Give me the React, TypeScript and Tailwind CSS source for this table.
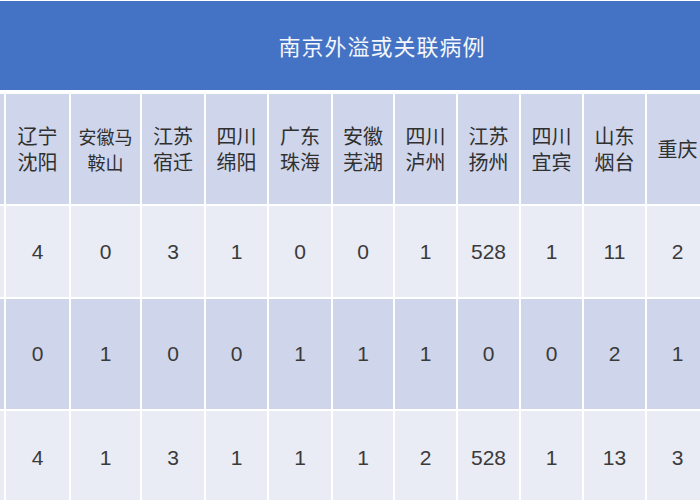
const cols = [
  { w: "w-[4px]", head: [""] },
  { w: "w-[63px]", head: ["辽宁", "沈阳"] },
  { w: "w-[69px]", head: ["安徽马", "鞍山"], small: true },
  { w: "w-[62px]", head: ["江苏", "宿迁"] },
  { w: "w-[61px]", head: ["四川", "绵阳"] },
  { w: "w-[62px]", head: ["广东", "珠海"] },
  { w: "w-[60px]", head: ["安徽", "芜湖"] },
  { w: "w-[61px]", head: ["四川", "泸州"] },
  { w: "w-[61px]", head: ["江苏", "扬州"] },
  { w: "w-[61px]", head: ["四川", "宜宾"] },
  { w: "w-[61px]", head: ["山东", "烟台"] },
  { w: "w-[61px]", head: ["重庆"] },
];

const rows = [
  { h: "h-[91px]", bg: "bg-[#e9ebf5]", vals: ["", "4", "0", "3", "1", "0", "0", "1", "528", "1", "11", "2"] },
  { h: "h-[110px]", bg: "bg-[#cfd5ea]", vals: ["", "0", "1", "0", "0", "1", "1", "1", "0", "0", "2", "1"] },
  { h: "h-[94px]", bg: "bg-[#e9ebf5]", vals: ["", "4", "1", "3", "1", "1", "1", "2", "528", "1", "13", "3"] },
];

const cjk = { fontFamily: '"Noto Sans CJK SC", "Noto Sans", sans-serif' };
const num = { fontFamily: '"Liberation Sans", Arial, sans-serif' };

export default function App() {
  return (
    <div className="w-[700px] h-[500px] overflow-hidden bg-white">
      <div className="mt-px h-[89px] bg-[#4472c4] flex items-center justify-center pl-[64px]">
        <span className="text-[22px] text-[#f4f6fb] tracking-[1px]" style={cjk}>
          南京外溢或关联病例
        </span>
      </div>
      <div className="mt-[4px] flex flex-col gap-[2px] w-[760px]">
        <div className="flex gap-[2px] h-[110px]">
          {cols.map((c, i) => (
            <div
              key={i}
              className={`${c.w} shrink-0 bg-[#cfd5ea] flex flex-col items-center justify-center text-[#303030] ${c.small ? "text-[18px] leading-[26px]" : "text-[20px] leading-[26px]"}`}
              style={cjk}
            >
              {c.head.map((t, j) => (
                <span key={j} className="whitespace-nowrap">{t}</span>
              ))}
            </div>
          ))}
        </div>
        {rows.map((r, ri) => (
          <div key={ri} className={`flex gap-[2px] ${r.h}`}>
            {r.vals.map((v, i) => (
              <div
                key={i}
                className={`${cols[i].w} shrink-0 ${r.bg} flex items-center justify-center text-[21px] text-[#3a3a3a]`}
                style={num}
              >
                {v}
              </div>
            ))}
          </div>
        ))}
      </div>
    </div>
  );
}
